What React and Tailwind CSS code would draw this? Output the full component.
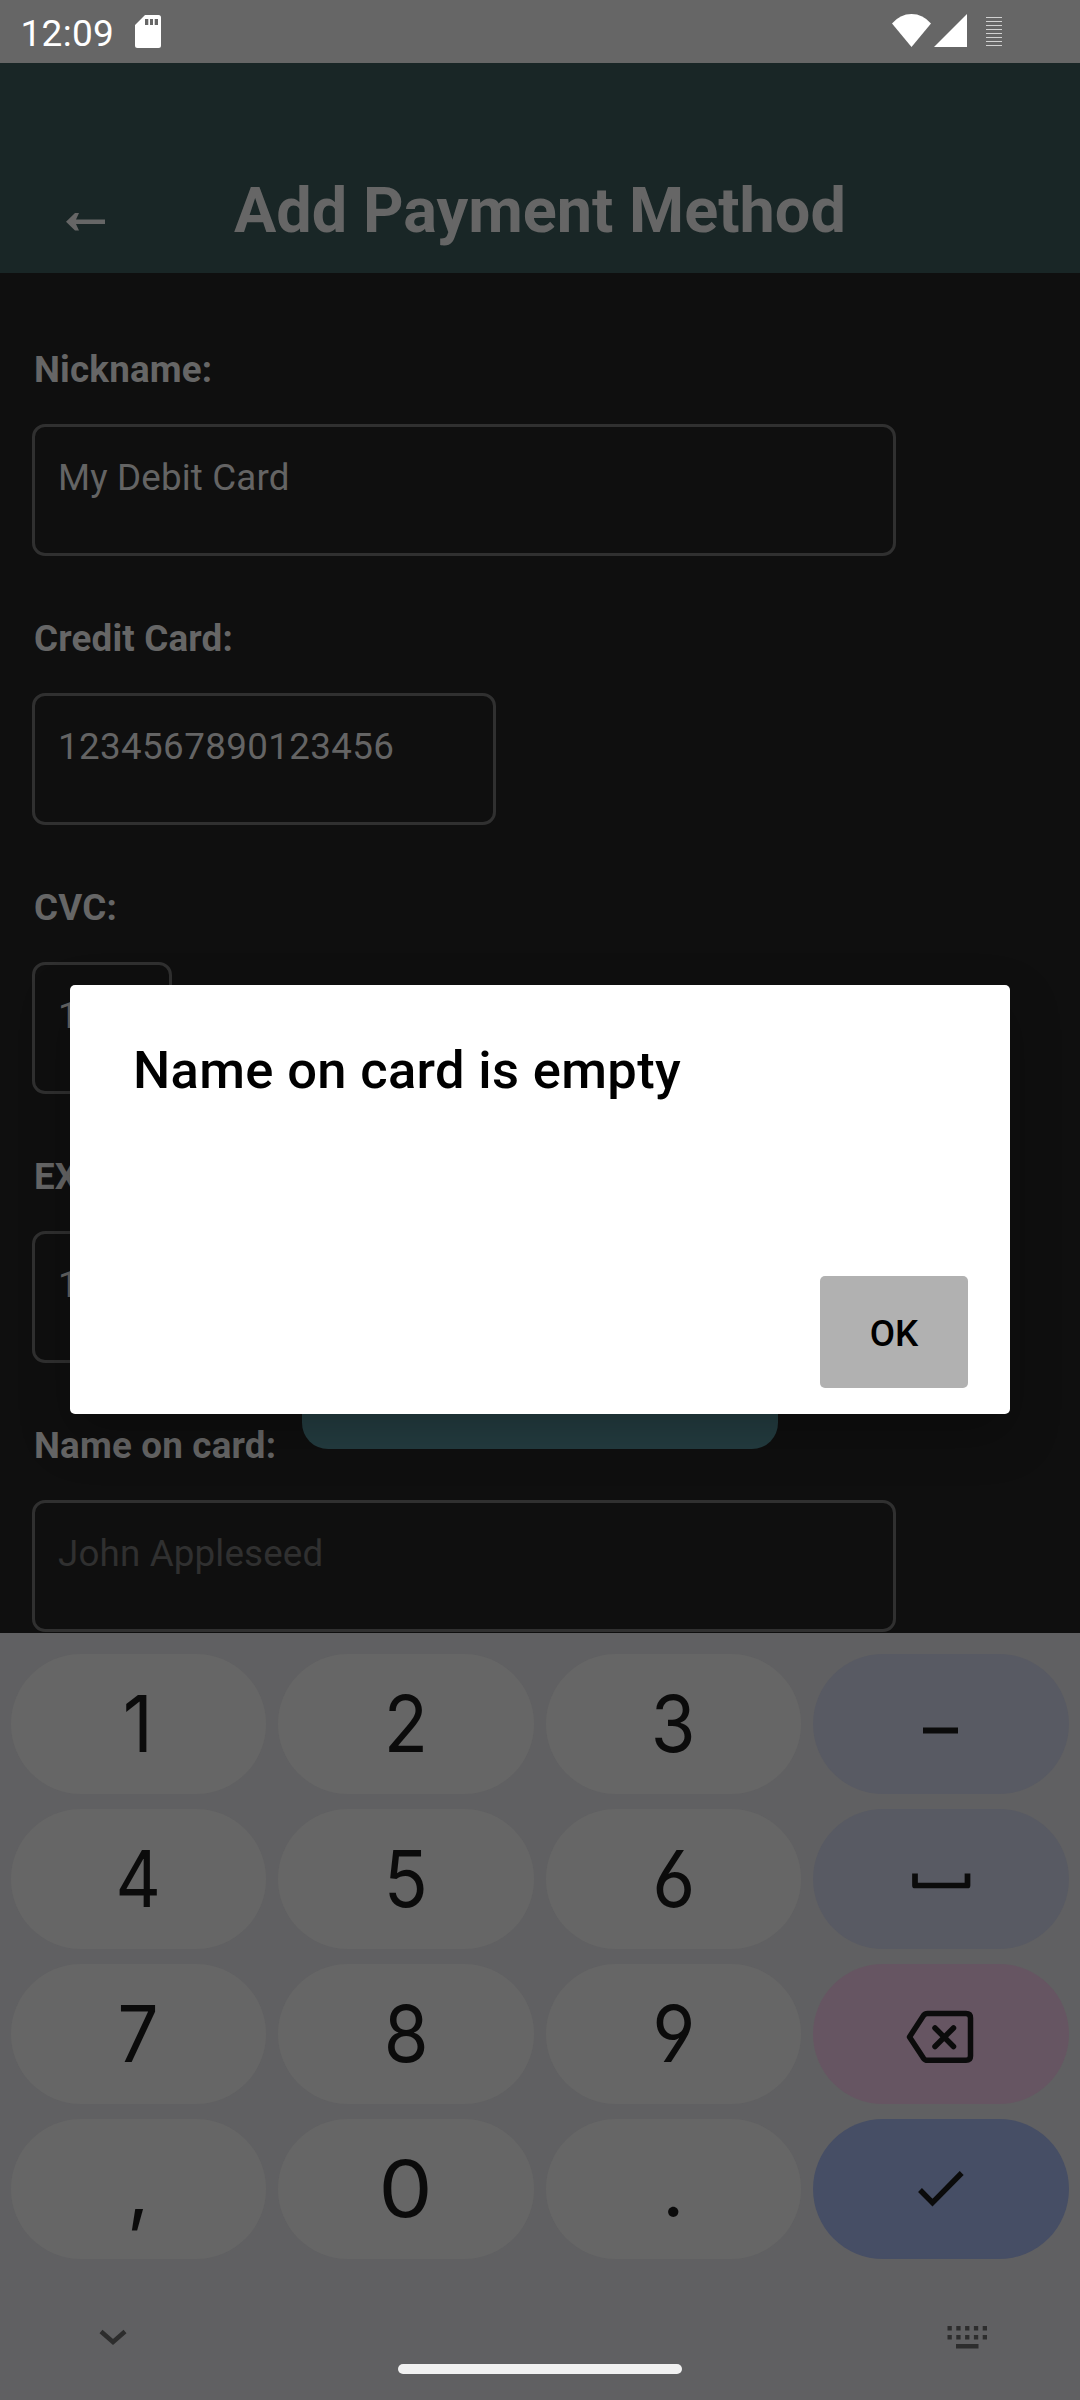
const fields = [
  { label: 'Nickname:', value: 'My Debit Card', box: 'w-[864px]' },
  { label: 'Credit Card:', value: '1234567890123456', box: 'w-[464px]', numeric: true },
  { label: 'CVC:', value: '123', box: 'w-[140px]', numeric: true },
  { label: 'EXP:', value: '1225', box: 'w-[140px]', numeric: true },
  { label: 'Name on card:', value: 'John Appleseed', box: 'w-[864px]', placeholder: true },
];

function StatusBar() {
  return (
    <div className="flex h-[63px] items-start bg-[#666666] text-white">
      <span className="ml-[20.5px] mt-[12px] w-[114.5px] text-[37px] leading-[44px] tracking-[0.3px]">12:09</span>
      <svg className="mt-[15px]" width="26" height="33" viewBox="0 0 26 33" fill="#fff">
        <path fillRule="evenodd" d="M10 0H23.500Q26 0 26 2.500V30.500Q26 33 23.500 33H2.500Q0 33 0 30.500V10ZM10 4V10H13.300V4ZM15 4V10H18V4ZM19.700 4V10H23V4Z" />
      </svg>
      <svg className="ml-auto mr-[76px] mt-[14px]" width="112" height="34" viewBox="0 0 112 34" fill="#fff">
        <path d="M0 9.500Q8 0 19.500 0T39 9.500L19.500 33Z" />
        <path d="M75 0V33H42Z" />
        <path d="M94 3h16v1h-16zm0 4h16v1h-16zm0 4h16v1h-16zm0 4h16v1h-16zm0 4h16v1h-16zm0 4h16v1h-16zm0 4h16v1h-16zm0 4h16v1h-16z" opacity="0.7" />
      </svg>
    </div>
  );
}

function Header() {
  return (
    <header className="flex h-[210px] items-start bg-[#192626] text-[#666]">
      <svg className="ml-[66px] mt-[150px]" width="39" height="18" viewBox="0 0 39 18" fill="#666">
        <path d="M0 8.700L9 0H13L10 6.500H39V11H10L13 17.500H9Z" />
      </svg>
      <h1 className="ml-[129px] mt-[111px] whitespace-nowrap text-[63px] font-bold leading-[74px]">Add Payment Method</h1>
    </header>
  );
}

function Field({ label, value, box, placeholder, numeric }) {
  return (
    <div className="mb-[61px] flex flex-col">
      <label className="mb-[32px] ml-[2px] h-[44px] whitespace-nowrap text-[36.75px] font-bold leading-[44px] tracking-[0.18px] text-[#666]">{label}</label>
      <div className={`h-[132px] overflow-hidden rounded-[13px] border-[3px] border-[#303030] pl-[23px] pt-[29px] ${box}`}>
        <span className={`text-[36.75px] leading-[44px] ${numeric ? 'tracking-[0.37px]' : 'tracking-[0.15px]'} ${placeholder ? 'text-[#303030]' : 'text-[#646464]'}`}>{value}</span>
      </div>
    </div>
  );
}

const keys = [
  ['1', 'scale-x-95'], ['2', 'scale-x-[0.93]'], ['3', 'scale-x-[0.93]'], ['minus', 'bg-[#585a63]'],
  ['4', 'scale-x-[0.9]'], ['5', 'scale-x-[0.93]'], ['6', 'scale-x-[0.95]'], ['space', 'bg-[#585a63]'],
  ['7', 'scale-x-[0.93]'], ['8', 'scale-x-[0.93]'], ['9', 'scale-x-[0.95]'], ['delete', 'bg-[#665562]'],
  [',', 'scale-x-100'], ['0', 'scale-x-110'], ['.', 'scale-x-100'], ['done', 'bg-[#464e65]'],
];

const icons = {
  minus: <path d="M110 76.500H145" strokeWidth="6" />,
  space: <path d="M102 64.500V76.500H154.500V64.500" strokeWidth="5.700" strokeLinejoin="round" />,
  delete: (
    <g strokeWidth="5.500" strokeLinejoin="round" strokeLinecap="round">
      <path d="M96.500 73L110.500 51.500Q112 49.500 114.500 49.500H153Q157.500 49.500 157.500 54V92Q157.500 96.300 153 96.300H114.500Q112 96.300 110.500 94.300Z" />
      <path d="M122 64L140.500 82.500M140.500 64L122 82.500" />
    </g>
  ),
  done: <path d="M107 71L119.500 83.700L148.700 54" strokeWidth="5.500" />,
};

function Key({ name, look }) {
  if (icons[name]) {
    return (
      <button className={`h-[140px] rounded-[70px] ${look}`}>
        <svg width="256" height="140" viewBox="0 0 256 140" fill="none" stroke="#0b0b0b">{icons[name]}</svg>
      </button>
    );
  }
  return (
    <button className="flex h-[140px] justify-center rounded-[70px] bg-[#666666]">
      <span className={`font-[Inter,sans-serif] text-[78px] leading-[140px] text-[#0b0b0b] [font-feature-settings:'cv03','cv04'] ${look}`}>{name}</span>
    </button>
  );
}

function Keyboard() {
  return (
    <section className="flex h-[767px] flex-col bg-[#606062]">
      <div className="ml-[10.5px] mr-[11.5px] mt-[21px] grid grid-cols-4 gap-x-[12px] gap-y-[15px]">
        {keys.map(([name, look]) => <Key key={name} name={name} look={look} />)}
      </div>
      <div className="mx-[92px] mt-[65px] flex justify-between">
        <svg width="42" height="30" viewBox="0 0 42 30" fill="none" stroke="#2d2d2d" strokeWidth="4.500">
          <path d="M9 7.500L21 18L33 7.500" />
        </svg>
        <svg width="42" height="30" viewBox="0 0 42 30" fill="#2d2d2d">
          <path d="M1.500 2h4.300v4.500h-4.300zm8.800 0h4.300v4.500h-4.300zm8.800 0h4.300v4.500h-4.300zm8.800 0h4.300v4.500h-4.300zm8.800 0h4.300v4.500h-4.300zM1.500 11h4.300v4.500h-4.300zm8.800 0h4.300v4.500h-4.300zm8.800 0h4.300v4.500h-4.300zm8.800 0h4.300v4.500h-4.300zm8.800 0h4.300v4.500h-4.300zM10 20h22.500v4.500H10z" />
        </svg>
      </div>
      <div className="mx-auto mt-[10px] h-[10px] w-[284px] rounded-full bg-[#f1f1f1]" />
    </section>
  );
}

function Alert() {
  return (
    <div className="absolute left-[70px] top-[985px] flex h-[429px] w-[940px] flex-col justify-between rounded-[5px] bg-white pb-[26px] pl-[63px] pr-[42px] pt-[54px] text-black shadow-[0_20px_50px_rgba(0,0,0,0.25)]">
      <h2 className="text-[52.5px] font-medium leading-[62px] tracking-[0.34px]">Name on card is empty</h2>
      <button className="h-[112px] w-[148px] self-end rounded-[5px] bg-[#b1b1b1] pt-[3px] text-[36.75px] font-medium">OK</button>
    </div>
  );
}

export default function App() {
  return (
    <div className="relative h-[2400px] w-[1080px] overflow-hidden bg-[#0f0f0f] font-[Roboto,sans-serif]">
      <StatusBar />
      <Header />
      <main className="h-[1360px] overflow-hidden pl-[32px] pt-[75px]">
        {fields.map((f) => <Field key={f.label} {...f} />)}
      </main>
      <Keyboard />
      <button className="absolute left-[302px] top-[1340px] h-[109px] w-[476px] rounded-[26px] bg-[#243d41]" />
      <Alert />
    </div>
  );
}
